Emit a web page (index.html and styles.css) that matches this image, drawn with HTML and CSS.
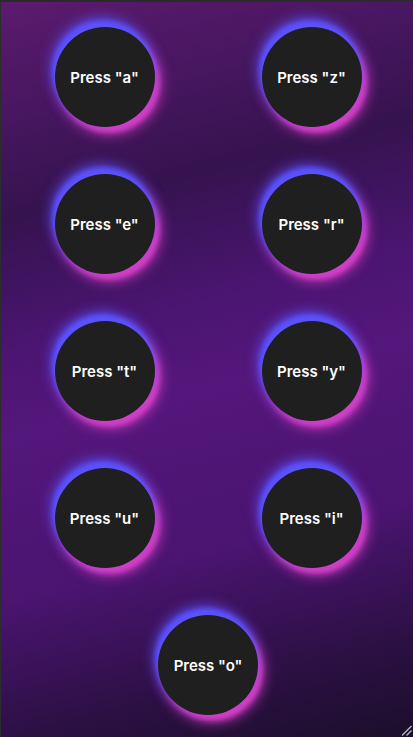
FILE: index.html
```html
<!DOCTYPE html>
<html lang="en">
<head>
<meta charset="utf-8">
<title>Keys</title>
<link rel="stylesheet" href="styles.css">
</head>
<body>
<main class="pad">
  <div class="grid">
    <button class="key">Press "a"</button>
    <button class="key">Press "z"</button>
    <button class="key">Press "e"</button>
    <button class="key">Press "r"</button>
    <button class="key">Press "t"</button>
    <button class="key">Press "y"</button>
    <button class="key">Press "u"</button>
    <button class="key">Press "i"</button>
    <button class="key key-last">Press "o"</button>
  </div>
  <svg class="resize" width="11" height="11" viewBox="0 0 11 11">
    <path d="M1 10.5 L10.5 1 M5.5 10.5 L10.5 5.5" stroke="#b9b4c4" stroke-width="1.4" fill="none"/>
  </svg>
</main>
</body>
</html>
```
FILE: styles.css
```css
html, body {
  margin: 0;
  padding: 0;
  height: 100%;
  overflow: hidden;
}
body {
  font-family: Inter, "Liberation Sans", Arial, sans-serif;
  background: #1c0e2c;
}
.pad {
  position: relative;
  box-sizing: border-box;
  height: 737px;
  border-top: 2px solid #2a2b2c;
  border-left: 1px solid #2a2e2c;
  background: linear-gradient(166deg, #5c1a6e 0%, #4a1762 12%, #35134f 26%, #4b1572 42%, #54177b 52%, #4a1470 72%, #2c1044 88%, #1b0e2b 100%);
  overflow: hidden;
}
.grid {
  display: grid;
  grid-template-columns: 207px 207px;
  justify-items: center;
  row-gap: 47px;
  padding-top: 25px;
}
.key {
  width: 100px;
  height: 100px;
  border-radius: 50%;
  border: none;
  background: #1f1f1f;
  color: #ffffff;
  font-family: Inter, "Liberation Sans", Arial, sans-serif;
  font-size: 15px;
  font-weight: 600;
  padding: 1px 0 0;
  box-shadow: -2px -6px 5px #5b52ff, -3px -8px 14px #5b52ff, 4px 5px 5px #d63fc6, 5px 6px 14px #d63fc6;
}
.key-last {
  grid-column: 1 / span 2;
}
.resize {
  position: absolute;
  right: 1px;
  bottom: 1px;
}
```
